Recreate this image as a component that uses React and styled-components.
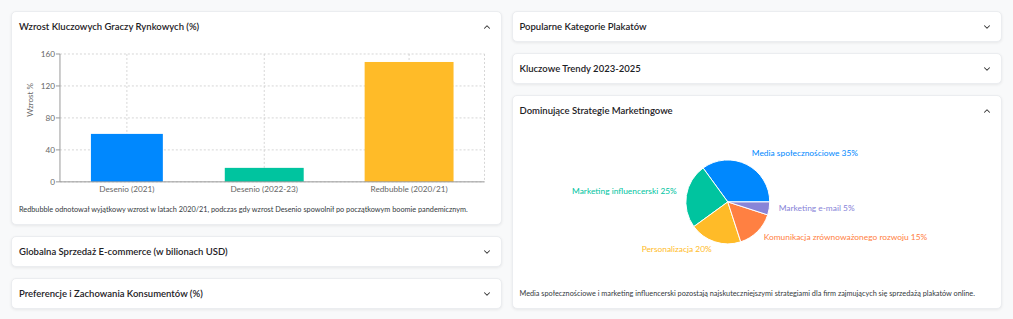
import styled, { createGlobalStyle } from 'styled-components';
import { ChevronDown, ChevronUp } from 'lucide-react';

const GlobalStyle = createGlobalStyle`
  body {
    margin: 0;
    background: #f8f9fa;
    font-family: Lato, "Noto Sans", sans-serif;
    color: #212529;
  }
`;

const Page = styled.div`
  display: grid;
  grid-template-columns: 1fr 1fr;
  gap: 10px;
  padding: 11px;
  align-items: start;
`;

const Column = styled.div`
  display: flex;
  flex-direction: column;
  gap: 11px;
`;

const Card = styled.section`
  background: #fff;
  border: 1px solid #ebedf0;
  border-radius: 5px;
  box-shadow: 0 1px 3px rgba(0, 0, 0, 0.07);
`;

const Header = styled.div`
  height: 29px;
  display: flex;
  align-items: center;
  justify-content: space-between;
  padding: 0 9px 0 7px;
  cursor: pointer;
`;

const Title = styled.h3`
  margin: 0;
  font-size: 9.5px;
  font-weight: 600;
  color: #1d2125;
`;

const Body = styled.div`
  padding: 0 7px 9px;
`;

const Chart = styled.svg`
  display: block;
  width: 100%;
  height: 162px;
  font-family: Lato, "Noto Sans", sans-serif;
`;

const Caption = styled.p`
  margin: 1px 0 0;
  font-size: 7.3px;
  line-height: 11px;
  white-space: nowrap;
  color: #343a40;
`;

function Panel({ title, open, children }) {
  const Icon = open ? ChevronUp : ChevronDown;
  return (
    <Card>
      <Header>
        <Title>{title}</Title>
        <Icon size={10} strokeWidth={2.5} color="#333" />
      </Header>
      {open && <Body>{children}</Body>}
    </Card>
  );
}

const bars = [
  { label: 'Desenio (2021)', value: 60, x: 72, w: 72, color: '#0088FE' },
  { label: 'Desenio (2022-23)', value: 17.5, x: 206, w: 79, color: '#00C49F' },
  { label: 'Redbubble (2020/21)', value: 150, x: 346, w: 89, color: '#FFBB28' },
];

function BarChart() {
  const axisX = 41;
  const top = 13;
  const base = 141;
  const right = 466;
  const scale = (base - top) / 160;
  const ticks = [0, 40, 80, 120, 160];
  return (
    <Chart viewBox="0 0 475 162" preserveAspectRatio="xMinYMin meet">
      {ticks.map(t => (
        <line key={t} x1={axisX} x2={right} y1={base - t * scale} y2={base - t * scale}
          stroke="#ccc" strokeDasharray="2 2" strokeWidth="0.8" />
      ))}
      {bars.map(b => (
        <line key={b.label} x1={b.x + b.w / 2} x2={b.x + b.w / 2} y1={top} y2={base}
          stroke="#ccc" strokeDasharray="2 2" strokeWidth="0.8" />
      ))}
      <line x1={right} x2={right} y1={top} y2={base} stroke="#ccc" strokeDasharray="2 2" strokeWidth="0.8" />
      {bars.map(b => (
        <rect key={b.label} x={b.x} y={base - b.value * scale} width={b.w} height={b.value * scale} fill={b.color} />
      ))}
      <line x1={axisX} x2={axisX} y1={top} y2={base} stroke="#999" strokeWidth="1" />
      <line x1={axisX} x2={right} y1={base} y2={base} stroke="#999" strokeWidth="1" />
      {ticks.map(t => (
        <g key={t}>
          <line x1={axisX - 4} x2={axisX} y1={base - t * scale} y2={base - t * scale} stroke="#999" />
          <text x={axisX - 5} y={base - t * scale + 3} fontSize="8.2" fill="#666" textAnchor="end">{t}</text>
        </g>
      ))}
      {bars.map(b => (
        <text key={b.label} x={b.x + b.w / 2} y={base + 10} fontSize="8.2" fill="#666" textAnchor="middle">{b.label}</text>
      ))}
      <text x={0} y={0} fontSize="8" fill="#666" textAnchor="middle" transform="translate(14 59) rotate(-90)">Wzrost %</text>
    </Chart>
  );
}

const slices = [
  { name: 'Media społecznościowe', value: 35, color: '#0088FE', lx: 232, ly: 28, anchor: 'start' },
  { name: 'Marketing influencerski', value: 25, color: '#00C49F', lx: 157, ly: 66, anchor: 'end' },
  { name: 'Personalizacja', value: 20, color: '#FFBB28', lx: 192, ly: 124, anchor: 'end' },
  { name: 'Komunikacja zrównoważonego rozwoju', value: 15, color: '#FF8042', lx: 244, ly: 112, anchor: 'start' },
  { name: 'Marketing e-mail', value: 5, color: '#8884d8', lx: 259, ly: 83, anchor: 'start' },
];

function PieChart() {
  const cx = 208;
  const cy = 77;
  const r = 42;
  let start = 0;
  const pt = a => [cx + r * Math.cos((a * Math.PI) / 180), cy - r * Math.sin((a * Math.PI) / 180)];
  return (
    <Chart viewBox="0 0 475 162" preserveAspectRatio="xMinYMin meet">
      {slices.map(s => {
        const sweep = (s.value / 100) * 360;
        const [x1, y1] = pt(start);
        const [x2, y2] = pt(start + sweep);
        start += sweep;
        const large = sweep > 180 ? 1 : 0;
        return (
          <path key={s.name}
            d={`M${cx},${cy} L${x1},${y1} A${r},${r} 0 ${large} 0 ${x2},${y2} Z`}
            fill={s.color} stroke="#fff" strokeWidth="1" />
        );
      })}
      {slices.map(s => (
        <text key={s.name} x={s.lx} y={s.ly + 3} fontSize="8.4" fill={s.color} textAnchor={s.anchor}>
          {s.name} {s.value}%
        </text>
      ))}
    </Chart>
  );
}

export default function App() {
  return (
    <>
      <GlobalStyle />
      <Page>
        <Column>
          <Panel title="Wzrost Kluczowych Graczy Rynkowych (%)" open>
            <BarChart />
            <Caption>
              Redbubble odnotował wyjątkowy wzrost w latach 2020/21, podczas gdy wzrost Desenio spowolnił po początkowym boomie pandemicznym.
            </Caption>
          </Panel>
          <Panel title="Globalna Sprzedaż E-commerce (w bilionach USD)" />
          <Panel title="Preferencje i Zachowania Konsumentów (%)" />
        </Column>
        <Column>
          <Panel title="Popularne Kategorie Plakatów" />
          <Panel title="Kluczowe Trendy 2023-2025" />
          <Panel title="Dominujące Strategie Marketingowe" open>
            <PieChart />
            <Caption>
              Media społecznościowe i marketing influencerski pozostają najskuteczniejszymi strategiami dla firm zajmujących się sprzedażą plakatów online.
            </Caption>
          </Panel>
        </Column>
      </Page>
    </>
  );
}
